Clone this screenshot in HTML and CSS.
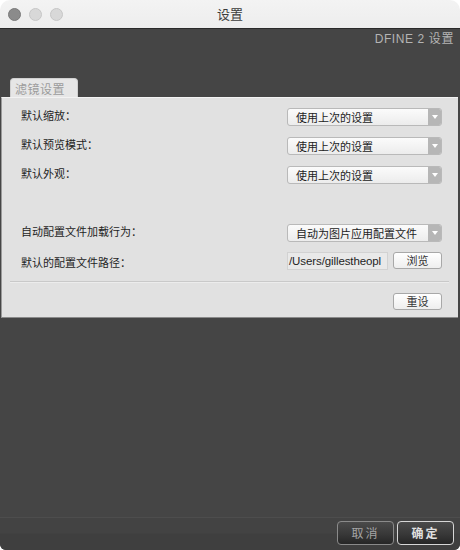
FILE: index.html
```html
<!DOCTYPE html>
<html lang="zh">
<head>
<meta charset="utf-8">
<title>设置</title>
<link rel="stylesheet" href="styles.css">
</head>
<body>
<div class="window">
  <div class="titlebar">
    <div class="lights">
      <span class="light close"></span>
      <span class="light"></span>
      <span class="light"></span>
    </div>
    <div class="title">设置</div>
  </div>
  <div class="content">
    <div class="header">DFINE 2 设置</div>
    <div class="tabs"><div class="tab">滤镜设置</div></div>
    <div class="panel">
      <div class="form">
        <div class="label up">默认缩放：</div>
        <div class="select"><span class="sel-text">使用上次的设置</span><span class="arrow"></span></div>
        <div class="label up">默认预览模式：</div>
        <div class="select"><span class="sel-text">使用上次的设置</span><span class="arrow"></span></div>
        <div class="label up">默认外观：</div>
        <div class="select"><span class="sel-text">使用上次的设置</span><span class="arrow"></span></div>
      </div>
      <div class="form form2">
        <div class="label up">自动配置文件加载行为：</div>
        <div class="select"><span class="sel-text">自动为图片应用配置文件</span><span class="arrow"></span></div>
        <div class="label">默认的配置文件路径：</div>
        <div class="path-row">
          <div class="path">/Users/gillestheopl</div>
          <div class="btn">浏览</div>
        </div>
      </div>
      <div class="sep"></div>
      <div class="reset-row"><div class="btn">重设</div></div>
    </div>
    <div class="spacer"></div>
    <div class="footer">
      <div class="dbtn">取消</div>
      <div class="dbtn primary">确定</div>
    </div>
  </div>
</div>
</body>
</html>
```

FILE: styles.css
```css
html, body {
  margin: 0;
  padding: 0;
  background: #ffffff;
}
body {
  font-family: "Noto Sans CJK SC", "Liberation Sans", sans-serif;
}
.window {
  width: 460px;
  height: 550px;
  display: flex;
  flex-direction: column;
  border-radius: 10px 10px 6px 6px;
  overflow: hidden;
}
.titlebar {
  height: 28px;
  flex: none;
  background: linear-gradient(#f3f3f3, #ededed);
  border-bottom: 1px solid #2a2a2a;
  display: flex;
  align-items: center;
  position: relative;
}
.lights {
  display: flex;
  gap: 8px;
  padding-left: 8px;
}
.light {
  width: 11px;
  height: 11px;
  border-radius: 50%;
  background: #d8d8d8;
  border: 0.5px solid #c6c6c6;
}
.light.close {
  background: #8b8b8b;
  border-color: #7a7a7a;
}
.title {
  position: absolute;
  left: 0;
  right: 0;
  text-align: center;
  font-size: 13px;
  line-height: 28px;
  color: #3c3c3c;
}
.content {
  flex: 1;
  background: #454545;
  display: flex;
  flex-direction: column;
}
.header {
  height: 49px;
  box-sizing: border-box;
  padding: 2px 6px 0 0;
  text-align: right;
  font-family: "Liberation Sans", "Noto Sans CJK SC", sans-serif;
  font-size: 12px;
  line-height: 16px;
  letter-spacing: 0.6px;
  color: #b4b4b4;
}
.tabs {
  display: flex;
  padding-left: 10px;
}
.tab {
  width: 68px;
  height: 19px;
  box-sizing: border-box;
  background: #e6e6e6;
  border-radius: 4px 4px 0 0;
  border: 1px solid #d0d0d0;
  border-bottom: none;
  padding-left: 4px;
  font-size: 12px;
  line-height: 19px;
  color: #9c9c9c;
  letter-spacing: 0.5px;
}
.panel {
  margin: 0 2px 0 1px;
  height: 221px;
  box-sizing: border-box;
  background: #e1e1e1;
  border-top: 1px solid #f2f2f2;
  border-left: 1px solid #9a9a9a;
  border-bottom: 1px solid #8a8a8a;
  padding: 10px 16px 0 19px;
  display: flex;
  flex-direction: column;
}
.form {
  display: grid;
  grid-template-columns: 1fr 155px;
  grid-auto-rows: 18px;
  row-gap: 11px;
  align-items: center;
}
.form2 {
  margin-top: 40px;
  row-gap: 10px;
}
.label {
  font-size: 11px;
  color: #1e1e1e;
  line-height: 18px;
  padding-top: 1px;
}
.label.up {
  padding-top: 0;
  margin-top: -5px;
}
.select {
  height: 18px;
  box-sizing: border-box;
  border: 1px solid #b9b9b9;
  border-radius: 3px;
  background: linear-gradient(#fbfbfb, #ececec);
  display: flex;
  overflow: hidden;
}
.sel-text {
  flex: 1;
  padding-left: 8px;
  font-size: 11px;
  line-height: 16px;
  color: #222;
}
.arrow {
  width: 13px;
  background: #b6b6b6;
  display: flex;
  align-items: center;
  justify-content: center;
}
.arrow::after {
  content: "";
  width: 0;
  height: 0;
  border-left: 3.5px solid transparent;
  border-right: 3.5px solid transparent;
  border-top: 4px solid #ffffff;
}
.path-row {
  display: flex;
  gap: 5px;
  height: 18px;
}
.path {
  width: 101px;
  flex: none;
  height: 18px;
  box-sizing: border-box;
  background: #e9e9e9;
  border: 1px solid #d2d2d2;
  padding-left: 1px;
  font-family: "Liberation Sans", sans-serif;
  font-size: 11.5px;
  letter-spacing: -0.1px;
  line-height: 16px;
  color: #1e1e1e;
  white-space: nowrap;
  overflow: hidden;
}
.btn {
  width: 49px;
  flex: none;
  height: 17px;
  box-sizing: border-box;
  border: 1px solid #a8a8a8;
  border-radius: 3px;
  background: linear-gradient(#ffffff, #eeeeee);
  text-align: center;
  font-size: 11px;
  line-height: 15px;
  color: #333;
}
.sep {
  margin: 11px -7px 0 -11px;
  height: 0;
  border-top: 1px solid #c9c9c9;
  border-bottom: 1px solid #ececec;
}
.reset-row {
  display: flex;
  justify-content: flex-end;
  margin-top: 10px;
}
.spacer {
  flex: 1;
}
.footer {
  height: 33px;
  box-sizing: border-box;
  border-top: 1px solid #4d4d4d;
  background: linear-gradient(#434343 0, #434343 15px, #3f3f3f 16px, #3f3f3f);
  display: flex;
  justify-content: flex-end;
  gap: 3px;
  padding: 3px 6px 0 0;
}
.dbtn {
  width: 57px;
  height: 24px;
  box-sizing: border-box;
  border: 1px solid #8a8a8a;
  border-radius: 4px;
  background: linear-gradient(#4a4a4a, #3a3a3a 50%, #262626);
  text-align: center;
  font-size: 12px;
  line-height: 22px;
  color: #a5a5a5;
  letter-spacing: 2px;
}
.dbtn.primary {
  border-color: #d6d6d6;
  color: #e0e0e0;
  font-weight: bold;
}
```
